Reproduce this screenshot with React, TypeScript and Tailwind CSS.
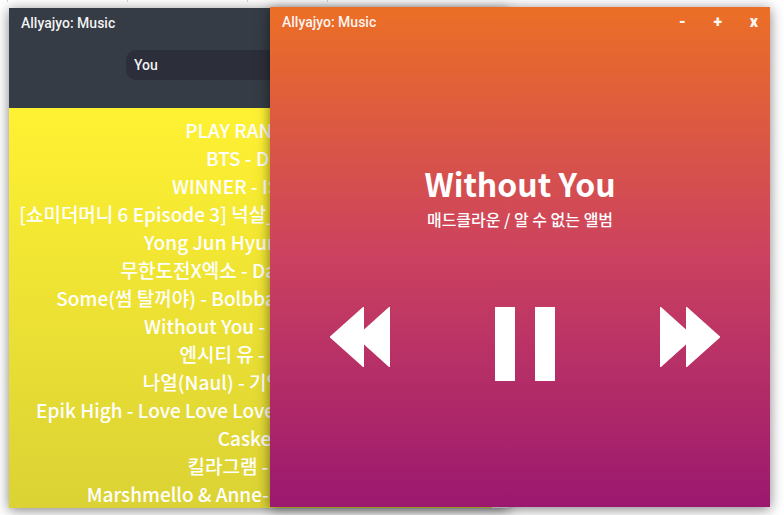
import { useState } from "react";

const tracks = [
  "PLAY RANDOM",
  "BTS - DNA",
  "WINNER - ISLAND",
  "[쇼미더머니 6 Episode 3] 넉살_N분의 1 (Feat. 한해 넉살)",
  "Yong Jun Hyung - Alone",
  "무한도전X엑소 - Dancing Kings",
  "Some(썸 탈꺼야) - Bolbbalgan Sachungi Live",
  "Without You - 매드클라운",
  "엔시티 유 - 일곱번",
  "나얼(Naul) - 기억의 빈자리",
  "Epik High - Love Love Love (Feat. 융진 of Casker)",
  "Casker.",
  "킬라그램 - 어디.",
  "Marshmello & Anne-Marie - FRIENDS",
];

const shadow = "shadow-[0_2px_12px_rgba(0,0,0,0.5)]";

function TitleBar({ controls = false }: { controls?: boolean }) {
  return (
    <header className="flex h-[30px] shrink-0 items-center justify-between pr-3 pl-3 font-['Roboto',sans-serif] text-sm font-medium text-white/95">
      <span>Allyajyo: Music</span>
      {controls && (
        <div className="flex text-base font-black">
          <button type="button" aria-label="Minimize" className="w-9 text-right">-</button>
          <button type="button" aria-label="Maximize" className="w-9 text-right">+</button>
          <button type="button" aria-label="Close" className="w-9 text-right">x</button>
        </div>
      )}
    </header>
  );
}

function SearchWindow() {
  const [query, setQuery] = useState("You");
  return (
    <section className={`absolute top-2 left-[9px] flex h-[500px] w-[500px] flex-col bg-[#363c45] ${shadow}`}>
      <TitleBar />
      <div className="flex h-[70px] shrink-0 justify-center pt-3">
        <input
          type="text"
          aria-label="Search music"
          value={query}
          onChange={(e) => setQuery(e.target.value)}
          className="h-[30px] w-[266px] rounded-[10px] bg-[#2c2f3a] px-2 font-['Roboto',sans-serif] text-sm font-medium text-white/95 outline-none"
        />
      </div>
      <div className="flex min-h-0 flex-1 bg-[#f1f1f1] pr-[17px]">
        <ul className="flex-1 overflow-hidden bg-linear-to-b/srgb from-[#fff132] to-[#dbd235] pt-2 font-['Noto_Sans_CJK_KR',sans-serif] text-[19px] leading-7 font-medium text-white">
          {tracks.map((track) => (
            <li key={track}>
              <button type="button" className="block w-full text-center whitespace-nowrap">{track}</button>
            </li>
          ))}
        </ul>
      </div>
    </section>
  );
}

function PlayerWindow() {
  return (
    <section className={`absolute top-[7px] left-[270px] flex h-[500px] w-[500px] flex-col bg-linear-to-b/srgb from-[#ec6f26] via-[#cb4160] to-[#9b186f] font-['Noto_Sans_CJK_KR',sans-serif] text-white ${shadow}`}>
      <TitleBar controls />
      <div className="pt-[122px] text-center">
        <h1 className="text-[32px] leading-12 font-bold">Without You</h1>
        <p className="text-base leading-6 font-medium">매드클라운 / 알 수 없는 앨범</p>
      </div>
      <div className="flex items-start justify-between pt-[76px] pr-[50px] pl-[60px]">
        <button type="button" aria-label="Previous">
          <svg className="h-[60px] w-[60px]" viewBox="0 0 60 60" fill="currentColor">
            <path d="M0 29.5 33 0h1v22.5L59 0h1v60h-1L34 37.5V60h-1L0 30.5z" />
          </svg>
        </button>
        <button type="button" aria-label="Pause">
          <svg className="h-[74px] w-[60px]" viewBox="0 0 60 74" fill="currentColor">
            <path d="M0 0h20v74H0zM40 0h20v74H40z" />
          </svg>
        </button>
        <button type="button" aria-label="Next">
          <svg className="h-[60px] w-[60px]" viewBox="0 0 60 60" fill="currentColor">
            <path d="M60 29.5 27 0h-1v22.5L1 0H0v60h1l25-22.5V60h1l33-29.5z" />
          </svg>
        </button>
      </div>
    </section>
  );
}

export default function App() {
  return (
    <main className="relative h-screen overflow-hidden bg-white">
      <div className="flex h-[2px] pl-[7px]">
        <i className="w-[120px] border-l border-gray-300" />
        <i className="w-[120px] border-l border-gray-300" />
        <i className="w-20 border-l border-gray-300" />
        <i className="border-l border-gray-300" />
      </div>
      <SearchWindow />
      <PlayerWindow />
    </main>
  );
}
